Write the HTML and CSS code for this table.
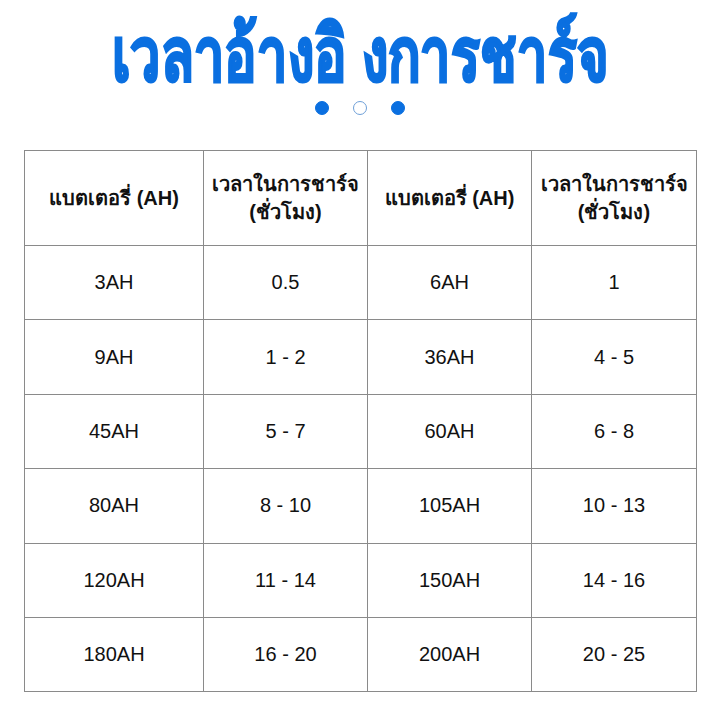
FILE: index.html
```html
<!DOCTYPE html>
<html lang="th">
<head>
<meta charset="utf-8">
<link rel="stylesheet" href="styles.css">
</head>
<body>
<div class="page">
  <h1 class="title"><span class="title-text">เวลาอ้างอิ งการชาร์จ</span></h1>
  <div class="dots"><span class="dot"></span><span class="dot hollow"></span><span class="dot"></span></div>
  <table class="grid">
    <colgroup><col class="c1"><col class="c2"><col class="c3"><col class="c4"></colgroup>
    <thead>
      <tr><th>แบตเตอรี่ (AH)</th><th>เวลาในการชาร์จ<br>(ชั่วโมง)</th><th>แบตเตอรี่ (AH)</th><th>เวลาในการชาร์จ<br>(ชั่วโมง)</th></tr>
    </thead>
    <tbody>
      <tr><td>3AH</td><td>0.5</td><td>6AH</td><td>1</td></tr>
      <tr><td>9AH</td><td>1 - 2</td><td>36AH</td><td>4 - 5</td></tr>
      <tr><td>45AH</td><td>5 - 7</td><td>60AH</td><td>6 - 8</td></tr>
      <tr><td>80AH</td><td>8 - 10</td><td>105AH</td><td>10 - 13</td></tr>
      <tr><td>120AH</td><td>11 - 14</td><td>150AH</td><td>14 - 16</td></tr>
      <tr><td>180AH</td><td>16 - 20</td><td>200AH</td><td>20 - 25</td></tr>
    </tbody>
  </table>
</div>
</body>
</html>
```
FILE: styles.css
```css
html, body { margin: 0; padding: 0; background: #fff; }
.page { width: 720px; height: 720px; padding-top: 15px; box-sizing: border-box; font-family: "Liberation Sans", Arial, sans-serif; color: #111; }
.title { margin: 0; text-align: center; color: #0a6fe0; font-size: 76px; line-height: 80px; font-weight: 700; letter-spacing: 0; }
.title-text { display: inline-block; transform: scaleX(0.71); transform-origin: center; white-space: nowrap; -webkit-text-stroke: 2.5px #0a6fe0; }
.dots { display: flex; justify-content: center; gap: 24px; margin-top: 6px; height: 14px; }
.dot { width: 12px; height: 12px; border-radius: 50%; background: #0a6fe0; border: 1px solid #0a6fe0; }
.dot.hollow { background: #fff; border-color: #6e9fd8; }
.grid { margin: 35px 0 0 24px; width: 672px; border-collapse: collapse; table-layout: fixed; }
.c1 { width: 179px; } .c2 { width: 164px; } .c3 { width: 164px; } .c4 { width: 165px; }
.grid th, .grid td { border: 1px solid #8a8a8a; text-align: center; vertical-align: middle; padding: 0; }
.grid th { height: 94px; font-size: 20px; font-weight: 700; line-height: 28px; }
.grid td { height: 73.4px; font-size: 20px; font-weight: 400; }
```
